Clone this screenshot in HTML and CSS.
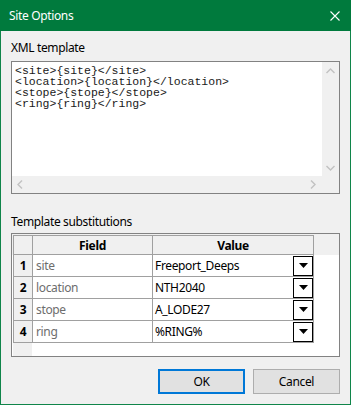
FILE: index.html
```html
<!DOCTYPE html>
<html lang="en">
<head>
    <meta charset="UTF-8">
    <title>Site Options</title>
    <link rel="stylesheet" href="styles.css">
</head>
<body>
    <div class="dialog">
        <div class="titlebar">
            <span class="title">Site Options</span>
            <svg class="close" width="10" height="10" viewBox="0 0 10 10">
                <path d="M0.5 0.5 L9.5 9.5 M9.5 0.5 L0.5 9.5" stroke="#fff" stroke-width="1.1" fill="none"/>
            </svg>
        </div>
        <div class="content">
            <div class="label">XML template</div>
            <div class="editor">
<pre class="code">&lt;site&gt;{site}&lt;/site&gt;
&lt;location&gt;{location}&lt;/location&gt;
&lt;stope&gt;{stope}&lt;/stope&gt;
&lt;ring&gt;{ring}&lt;/ring&gt;</pre>
                <div class="vscroll">
                    <svg width="9" height="6" viewBox="0 0 9 6"><path d="M0.5 5 L4.5 1 L8.5 5" stroke="#c2c2c2" stroke-width="1.4" fill="none"/></svg>
                    <svg width="9" height="6" viewBox="0 0 9 6"><path d="M0.5 1 L4.5 5 L8.5 1" stroke="#c2c2c2" stroke-width="1.4" fill="none"/></svg>
                </div>
                <div class="hscroll">
                    <svg width="6" height="9" viewBox="0 0 6 9"><path d="M5 0.5 L1 4.5 L5 8.5" stroke="#c2c2c2" stroke-width="1.4" fill="none"/></svg>
                    <svg width="6" height="9" viewBox="0 0 6 9"><path d="M1 0.5 L5 4.5 L1 8.5" stroke="#c2c2c2" stroke-width="1.4" fill="none"/></svg>
                </div>
                <div class="corner"></div>
            </div>

            <div class="label label-sub">Template substitutions</div>
            <div class="grid">
                <table class="subs">
                    <tr>
                        <th class="rowhead"></th>
                        <th class="col-field">Field</th>
                        <th class="col-value">Value</th>
                    </tr>
                    <tr>
                        <td class="rowhead">1</td>
                        <td class="field">site</td>
                        <td class="value"><span>Freeport_Deeps</span><span class="combo"><svg width="9" height="5" viewBox="0 0 9 5"><path d="M0 0 H9 L4.5 5 Z" fill="#000"/></svg></span></td>
                    </tr>
                    <tr>
                        <td class="rowhead">2</td>
                        <td class="field">location</td>
                        <td class="value"><span>NTH2040</span><span class="combo"><svg width="9" height="5" viewBox="0 0 9 5"><path d="M0 0 H9 L4.5 5 Z" fill="#000"/></svg></span></td>
                    </tr>
                    <tr>
                        <td class="rowhead">3</td>
                        <td class="field">stope</td>
                        <td class="value"><span>A_LODE27</span><span class="combo"><svg width="9" height="5" viewBox="0 0 9 5"><path d="M0 0 H9 L4.5 5 Z" fill="#000"/></svg></span></td>
                    </tr>
                    <tr>
                        <td class="rowhead">4</td>
                        <td class="field">ring</td>
                        <td class="value"><span>%RING%</span><span class="combo"><svg width="9" height="5" viewBox="0 0 9 5"><path d="M0 0 H9 L4.5 5 Z" fill="#000"/></svg></span></td>
                    </tr>
                </table>
            </div>

            <div class="buttons">
                <button class="btn btn-default">OK</button>
                <button class="btn">Cancel</button>
            </div>
        </div>
    </div>
</body>
</html>
```

FILE: styles.css
```css
* {
    box-sizing: border-box;
}

body {
    margin: 0;
    font-family: 'Noto Sans', 'Open Sans', sans-serif;
    font-size: 12px;
    letter-spacing: -0.35px;
    color: #000;
    background: #f0f0f0;
}

.dialog {
    width: 351px;
    height: 405px;
    background: #f0f0f0;
    border: 1px solid #10854a;
    border-top: none;
}

.titlebar {
    height: 31px;
    margin: 0 -1px;
    background: #007a3d;
    display: flex;
    align-items: center;
    justify-content: space-between;
    padding: 0 11px 0 9px;
}

.title {
    color: #fff;
    font-size: 12px;
    line-height: 16px;
}

.close {
    display: block;
}

.content {
    padding: 0 10px;
}

.label {
    line-height: 16px;
    margin-top: 9px;
}

.label-sub {
    margin-top: 20px;
}

.editor {
    margin-top: 5px;
    height: 133px;
    border: 1px solid #828282;
    background: #fff;
    display: grid;
    grid-template-columns: 1fr 17px;
    grid-template-rows: 1fr 17px;
}

.code {
    margin: 0;
    padding: 3px 3px;
    font-family: 'Liberation Mono', monospace;
    font-size: 11.5px;
    letter-spacing: 0;
    line-height: 11px;
    color: #1a1a1a;
    overflow: hidden;
}

.vscroll {
    background: #f0f0f0;
    display: flex;
    flex-direction: column;
    justify-content: space-between;
    align-items: center;
    padding: 6px 0 5px;
}

.hscroll {
    background: #f0f0f0;
    display: flex;
    justify-content: space-between;
    align-items: center;
    padding: 0 6px 0 5px;
}

.vscroll svg,
.hscroll svg {
    display: block;
}

.corner {
    background: #f0f0f0;
}

.grid {
    margin-top: 3px;
    height: 124px;
    border: 1px solid #828282;
    padding: 1px 0 0 1px;
    background:
        linear-gradient(#f0f0f0, #f0f0f0) 0 0 / 100% 21px no-repeat,
        linear-gradient(#f0f0f0, #f0f0f0) 1px 0 / 19px 100% no-repeat,
        #fff;
}

.subs {
    table-layout: fixed;
    width: 301px;
    border-collapse: separate;
    border-spacing: 0;
    border-left: 1px solid #a0a0a0;
    border-top: 1px solid #a0a0a0;
}

.subs th,
.subs td {
    padding: 0;
    border-right: 1px solid #a0a0a0;
    border-bottom: 1px solid #a0a0a0;
    white-space: nowrap;
    overflow: hidden;
}

.subs th {
    height: 19px;
    background: #f0f0f0;
    font-weight: bold;
    text-align: center;
}

.subs td {
    height: 22px;
    background: #fff;
}

.subs .rowhead {
    width: 19px;
    background: #f0f0f0;
    text-align: center;
    font-weight: bold;
}

.col-field {
    width: 120px;
}

.col-value {
    width: 161px;
}

.field {
    padding-left: 3px !important;
    color: #6d6d6d;
}

.value {
    padding-left: 2px !important;
}

.value span:first-child {
    vertical-align: middle;
}

.combo {
    float: right;
    width: 20px;
    height: 20px;
    border: 1px solid #000;
    background: #fff;
    display: flex;
    align-items: center;
    justify-content: center;
}

.combo svg {
    display: block;
}

.buttons {
    margin-top: 12px;
    display: flex;
    justify-content: flex-end;
    gap: 8px;
}

.btn {
    width: 87px;
    height: 25px;
    font-family: inherit;
    font-size: 12px;
    letter-spacing: inherit;
    background: #e1e1e1;
    border: 1px solid #adadad;
    color: #000;
    padding: 0;
}

.btn-default {
    border: 2px solid #0078d7;
}
```
